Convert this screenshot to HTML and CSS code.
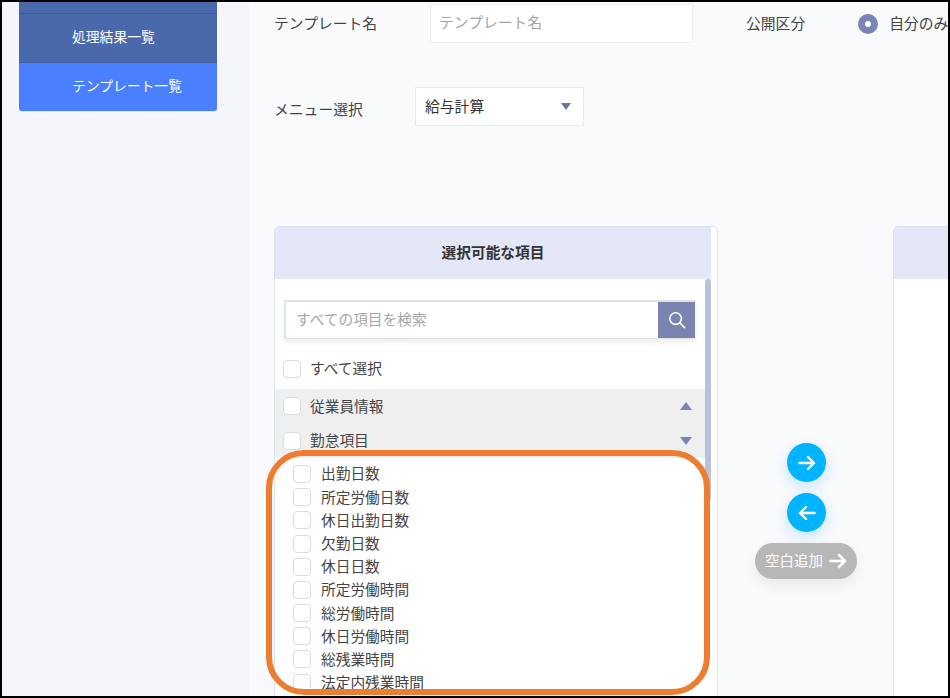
FILE: index.html
```html
<!DOCTYPE html>
<html lang="ja">
<head>
  <meta charset="UTF-8" />
  <title>テンプレート一覧</title>
  <link rel="stylesheet" href="styles.css">
</head>
<body>
  <div class="frame">
    <aside class="sidebar">
      <nav class="menu">
        <a class="menu-item menu-top"></a>
        <a class="menu-item">処理結果一覧</a>
        <a class="menu-item active">テンプレート一覧</a>
      </nav>
    </aside>

    <main class="main">
      <div class="form-row first">
        <label class="label name-label">テンプレート名</label>
        <div class="input placeholder">テンプレート名</div>
        <label class="label public-label">公開区分</label>
        <span class="radio"></span>
        <span class="label">自分のみ</span>
      </div>

      <div class="form-row second">
        <label class="label menu-label">メニュー選択</label>
        <div class="select">
          <span class="txt">給与計算</span>
          <span class="tri tri-down small"></span>
        </div>
      </div>

      <div class="transfer">
        <section class="panel">
          <div class="panel-head">選択可能な項目</div>
          <div class="panel-body">
            <div class="list">
              <div class="search">
                <div class="search-input placeholder">すべての項目を検索</div>
                <button class="search-btn">
                  <svg width="18" height="18" viewBox="0 0 18 18" fill="none" stroke="#fff" stroke-width="1.6" stroke-linecap="round">
                    <circle cx="7.6" cy="7.6" r="5.8"/>
                    <path d="M11.9 11.9 L16.6 16.6"/>
                  </svg>
                </button>
              </div>
              <div class="check-row all"><span class="box"></span><span class="txt">すべて選択</span></div>
              <div class="group">
                <div class="check-row group-row"><span class="box"></span><span class="txt">従業員情報</span><span class="tri tri-up"></span></div>
                <div class="check-row group-row"><span class="box"></span><span class="txt">勤怠項目</span><span class="tri tri-down"></span></div>
              </div>
              <div class="items">
                <div class="check-row item"><span class="box"></span><span class="txt">出勤日数</span></div>
                <div class="check-row item"><span class="box"></span><span class="txt">所定労働日数</span></div>
                <div class="check-row item"><span class="box"></span><span class="txt">休日出勤日数</span></div>
                <div class="check-row item"><span class="box"></span><span class="txt">欠勤日数</span></div>
                <div class="check-row item"><span class="box"></span><span class="txt">休日日数</span></div>
                <div class="check-row item"><span class="box"></span><span class="txt">所定労働時間</span></div>
                <div class="check-row item"><span class="box"></span><span class="txt">総労働時間</span></div>
                <div class="check-row item"><span class="box"></span><span class="txt">休日労働時間</span></div>
                <div class="check-row item"><span class="box"></span><span class="txt">総残業時間</span></div>
                <div class="check-row item"><span class="box"></span><span class="txt">法定内残業時間</span></div>
              </div>
            </div>
            <div class="scrollbar"><div class="thumb"></div></div>
          </div>
        </section>

        <div class="actions">
          <button class="round-btn">
            <svg width="18" height="16" viewBox="0 0 18 16" fill="none" stroke="#fff" stroke-width="2.4" stroke-linecap="round" stroke-linejoin="round">
              <path d="M1.5 8 H16 M10 2 L16 8 L10 14"/>
            </svg>
          </button>
          <button class="round-btn">
            <svg width="18" height="16" viewBox="0 0 18 16" fill="none" stroke="#fff" stroke-width="2.4" stroke-linecap="round" stroke-linejoin="round">
              <path d="M16.5 8 H2 M8 2 L2 8 L8 14"/>
            </svg>
          </button>
          <button class="blank-btn">
            <span class="blank-text">空白追加</span>
            <svg width="18" height="16" viewBox="0 0 18 16" fill="none" stroke="#fff" stroke-width="2.6" stroke-linecap="round" stroke-linejoin="round">
              <path d="M1.5 8 H16 M10 2 L16 8 L10 14"/>
            </svg>
          </button>
        </div>

        <section class="panel right-panel">
          <div class="panel-head"></div>
        </section>
      </div>
    </main>

    <div class="highlight"></div>
  </div>
</body>
</html>
```

FILE: styles.css
```css
* {
  box-sizing: border-box;
}
html, body {
  margin: 0;
  padding: 0;
}
body {
  font-family: "Noto Sans CJK JP", "Noto Sans", sans-serif;
  color: #444;
  font-size: 14.8px;
}
.frame {
  position: relative;
  display: flex;
  width: 950px;
  height: 698px;
  border: 2px solid #000;
  overflow: hidden;
  white-space: nowrap;
}
.txt {
  margin-bottom: 2px;
}
.sidebar {
  flex: 0 0 247px;
  background-color: #f5f6fb;
}
.menu {
  margin-left: 17px;
  width: 198px;
  border-radius: 0 0 3px 3px;
  overflow: hidden;
  box-shadow: 0 1px 1px rgba(0,0,0,0.08);
}
.menu-item {
  display: block;
  height: 49px;
  padding-left: 53px;
  line-height: 45px;
  font-size: 13.8px;
  color: #fff;
  background-color: #4a69ad;
  border-bottom: 1px solid #3f5c9c;
}
.menu-top {
  height: 12px;
}
.menu-item.active {
  height: 48px;
  background-color: #4a80ff;
  border-bottom: none;
}
.main {
  flex: 1;
  min-width: 0;
  padding: 2px 0 0 25px;
  background-color: #f9fafc;
  overflow: hidden;
}
.form-row {
  display: flex;
  align-items: center;
}
.second {
  margin-top: 44px;
}
.label {
  color: #444;
  margin-bottom: 3px;
}
.name-label {
  width: 156px;
  flex: none;
}
.input {
  flex: none;
  width: 263px;
  height: 39px;
  line-height: 34px;
  padding-left: 8px;
  background-color: #fff;
  border: 1px solid #eeeeee;
}
.placeholder {
  color: #a5a5a5;
}
.public-label {
  margin-left: 53px;
}
.radio {
  flex: none;
  width: 20px;
  height: 20px;
  margin: 0 11px 0 53px;
  border-radius: 50%;
  border: 7px solid #7a84b5;
  background-color: #fff;
}
.menu-label {
  width: 141px;
  flex: none;
  margin: 3px 0 0 0;
}
.select {
  display: flex;
  align-items: center;
  justify-content: space-between;
  width: 169px;
  height: 39px;
  padding: 0 12px 0 9px;
  background-color: #fff;
  border: 1px solid #eaeaea;
  color: #333;
}
.tri {
  display: block;
  width: 0;
  height: 0;
  border-left: 6.5px solid transparent;
  border-right: 6.5px solid transparent;
}
.tri-up {
  border-bottom: 8px solid #7a84b5;
  margin-left: auto;
  margin-right: 13px;
}
.tri-down {
  border-top: 8px solid #7a84b5;
  margin-left: auto;
  margin-right: 13px;
}
.tri-down.small {
  border-left-width: 5.5px;
  border-right-width: 5.5px;
  border-top: 7px solid #6a74a5;
  margin-right: 0;
}
.transfer {
  display: flex;
  align-items: flex-start;
  margin-top: 100px;
}
.panel {
  flex: none;
  width: 444px;
  height: 520px;
  padding-right: 6px;
  background-color: #fff;
  border: 1px solid #dde1f5;
  border-radius: 5px 5px 0 0;
  overflow: hidden;
}
.right-panel {
  width: 300px;
}
.panel-head {
  height: 52px;
  line-height: 49px;
  font-size: 14.7px;
  text-align: center;
  font-weight: 700;
  color: #333;
  background-color: #e4e7f7;
}
.panel-body {
  display: flex;
  height: 467px;
}
.list {
  flex: 1;
  min-width: 0;
}
.scrollbar {
  flex: 0 0 6px;
}
.thumb {
  height: 221px;
  background-color: #bcc1d9;
  border-radius: 3px 3px 0 0;
}
.search {
  display: flex;
  height: 39px;
  margin: 21px 10px 0 9px;
  background-color: #fff;
  border: 2px solid #e2e2e2;
  border-right: none;
  border-bottom-width: 1px;
  box-shadow: 0 3px 6px rgba(0,0,0,0.07);
}
.search-input {
  flex: 1;
  line-height: 34px;
  padding-left: 10px;
  font-size: 14.7px;
}
.search-btn {
  display: flex;
  align-items: center;
  justify-content: center;
  flex: 0 0 37px;
  padding: 0;
  border: none;
  background-color: #7a84b0;
}
.check-row {
  display: flex;
  align-items: center;
  color: #444;
  font-size: 14.7px;
}
.all {
  height: 41px;
  margin-top: 9px;
  padding-left: 8px;
}
.group {
  background-color: #efefef;
}
.group-row {
  height: 34.5px;
  padding-left: 8px;
}
.all .box,
.group-row .box {
  margin-right: 9px;
}
.items {
  padding-top: 4.4px;
}
.item {
  height: 23.2px;
  padding-left: 18px;
}
.box {
  flex: none;
  width: 18px;
  height: 18px;
  margin-right: 10px;
  background-color: #fff;
  border: 1px solid #dcdcdc;
  border-radius: 4px;
}
.actions {
  flex: 0 0 175px;
  display: flex;
  flex-direction: column;
  align-items: center;
  gap: 11px;
  padding-top: 217px;
}
.round-btn {
  display: flex;
  align-items: center;
  justify-content: center;
  width: 39px;
  height: 39px;
  margin-left: 2px;
  padding: 0;
  border: none;
  border-radius: 50%;
  background-color: #00b4ff;
  box-shadow: 0 5px 14px rgba(0,150,255,0.22);
}
.blank-btn {
  display: flex;
  align-items: center;
  justify-content: center;
  gap: 6px;
  width: 102px;
  height: 36px;
  padding: 0 0 0 1px;
  border: none;
  border-radius: 18px;
  background-color: #b7b7b7;
  color: #fff;
  font-family: inherit;
  font-size: 14.5px;
  box-shadow: 0 6px 14px rgba(0,0,0,0.07);
}
.blank-text {
  margin-bottom: 3px;
}
.highlight {
  position: absolute;
  left: 264px;
  top: 448px;
  width: 444px;
  height: 245px;
  border: 6px solid #ed7d31;
  border-radius: 38px;
  pointer-events: none;
}
```
